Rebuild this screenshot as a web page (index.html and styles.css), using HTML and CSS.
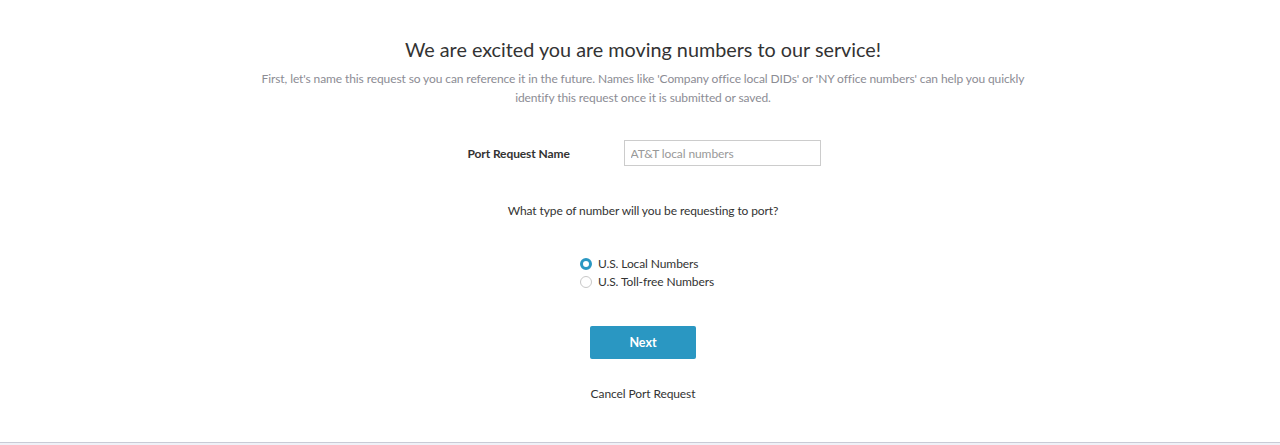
FILE: index.html
```html
<!DOCTYPE html>
<html>
  <head>
    <meta charset="UTF-8" />
    <title>Port Request</title>
    <link rel="stylesheet" href="styles.css">
  </head>
  <body>
    <div class="page">
      <div class="container">
        <h1>We are excited you are moving numbers to our service!</h1>
        <p class="intro">
          First, let's name this request so you can reference it in the future. Names like 'Company office local DIDs' or 'NY office numbers' can help you quickly<br>
          identify this request once it is submitted or saved.
        </p>
        <div class="field">
          <label for="portName">Port Request Name</label>
          <input id="portName" type="text" placeholder="AT&amp;T local numbers">
        </div>
        <div class="question">What type of number will you be requesting to port?</div>
        <div class="options">
          <label class="radio"><input type="radio" name="type" checked><span class="dot"></span>U.S. Local Numbers</label>
          <label class="radio"><input type="radio" name="type"><span class="dot"></span>U.S. Toll-free Numbers</label>
        </div>
        <button class="button">Next</button>
        <a class="cancel" href="#">Cancel Port Request</a>
      </div>
    </div>
    <div class="footer"></div>
  </body>
</html>
```

FILE: styles.css
```css
body {
  font-family: Lato, "Liberation Sans", sans-serif;
  margin: 0;
  padding: 0;
  background-color: #f0f1f7;
  color: #333;
  letter-spacing: -0.1px;
}
.page {
  background-color: white;
  height: 442px;
  border-bottom: 1px solid #c9cbd6;
}
.container {
  display: flex;
  flex-direction: column;
  align-items: center;
  padding: 34px 0 0 6px;
}
h1 {
  font-size: 19.8px;
  font-weight: normal;
  color: #333;
  margin: 0;
  line-height: 30px;
  letter-spacing: 0;
}
.intro {
  font-size: 12px;
  color: #8c8c94;
  text-align: center;
  line-height: 19px;
  margin: 5px 0 0;
}
.field {
  display: flex;
  align-items: center;
  margin-top: 33px;
}
.field label {
  font-size: 12px;
  font-weight: bold;
  width: 158px;
  padding-left: 2px;
  box-sizing: border-box;
}
.field input {
  width: 183px;
  height: 24px;
  padding: 0 6px;
  border: 1px solid #ccc;
  font-family: inherit;
  font-size: 12px;
  letter-spacing: -0.1px;
  color: #333;
}
.field input::placeholder {
  color: #999;
}
.question {
  font-size: 12px;
  margin-top: 37px;
}
.options {
  display: flex;
  flex-direction: column;
  margin-top: 37px;
  padding-left: 8px;
}
.radio {
  display: flex;
  align-items: center;
  font-size: 12px;
  line-height: 18px;
  cursor: pointer;
}
.radio input {
  display: none;
}
.dot {
  width: 10px;
  height: 10px;
  border: 1px solid #c8c8c8;
  border-radius: 50%;
  margin-right: 6px;
  background-color: white;
}
.radio input:checked + .dot {
  width: 6px;
  height: 6px;
  border: 3px solid #2a97c2;
}
.button {
  margin-top: 35px;
  width: 106px;
  height: 33px;
  background-color: #2a97c2;
  color: white;
  border: none;
  border-radius: 2px;
  font-family: inherit;
  font-size: 12.5px;
  font-weight: bold;
  cursor: pointer;
}
.cancel {
  margin-top: 27px;
  font-size: 12px;
  color: #333;
  text-decoration: none;
}
```
